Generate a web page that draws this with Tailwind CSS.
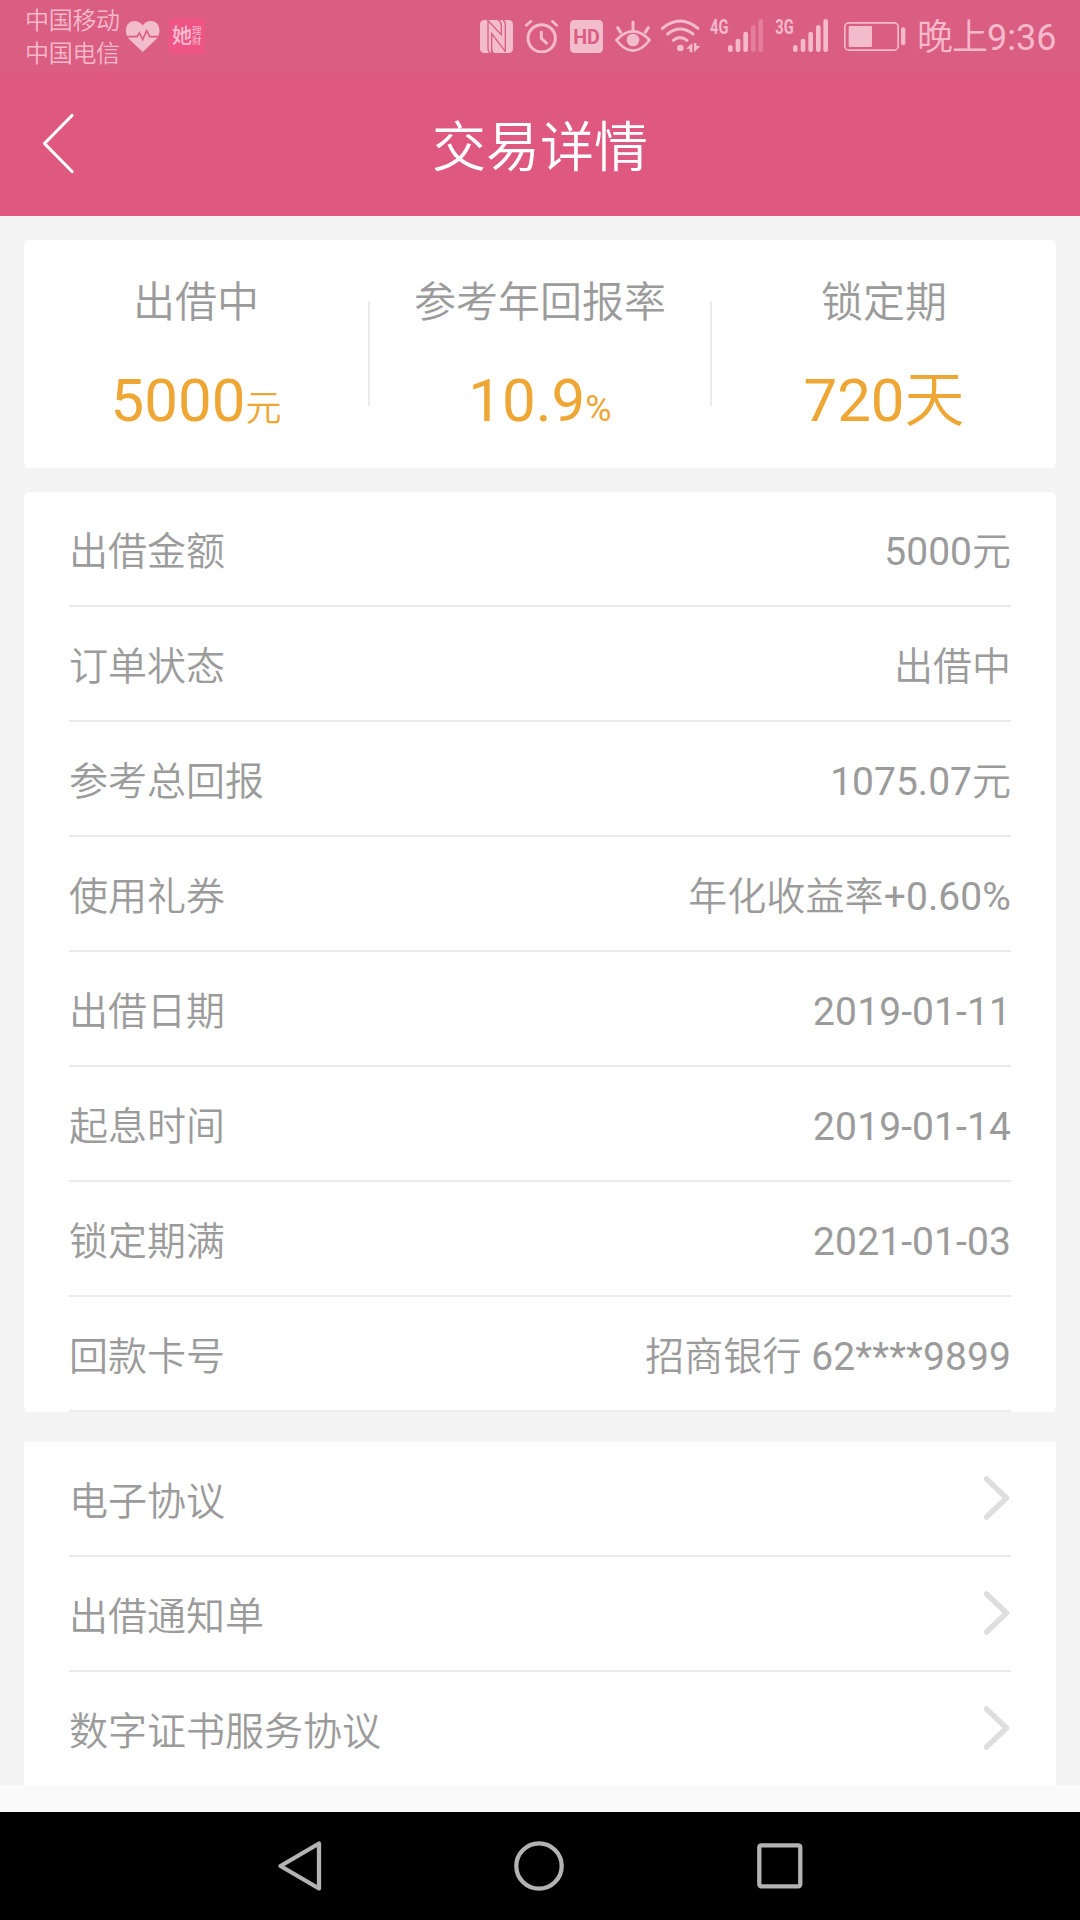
<!DOCTYPE html>
<html lang="zh-CN">
<head>
<meta charset="utf-8">
<title>交易详情</title>
<script src="https://cdn.jsdelivr.net/npm/@tailwindcss/browser@4"></script>
</head>
<body class="w-[1080px] h-[1920px] overflow-hidden bg-[#fafafa] text-[#9b9b9b] font-[Roboto,'Noto_Sans_CJK_SC',sans-serif] flex flex-col">

<!-- Status bar -->
<div class="h-[72px] shrink-0 bg-[#da5d82] text-[#f5b9cc] flex items-start">
  <div class="ml-[25px] mt-[5px] w-[96px] text-[24px] leading-[33px] font-[350] whitespace-nowrap tracking-[-0.3px]">
    <div>中国移动</div>
    <div>中国电信</div>
  </div>
  <svg class="ml-[4px] mt-[20px] shrink-0" width="35" height="33" viewBox="375 60 105 99">
    <path fill="#f3bccd" d="M428 156 L387 117 C370 98 376 63 404 63 C416 63 424 70 428 77 C432 70 440 63 453 63 C480 63 486 98 469 117 Z"/>
    <path fill="none" stroke="#da5d82" stroke-width="5" d="M374 110 H411 L418 99 L428 119 L440 92 L449 110 H482"/>
  </svg>
  <div class="ml-[9px] mt-[18px] w-[36px] h-[36px] shrink-0 rounded-[3px] bg-[#ee5585] text-[#f9bfd0] flex items-center justify-center">
    <span class="text-[20px] leading-none font-medium">她</span>
    <span class="w-[10px] text-[9.5px] leading-[10px]">理财</span>
  </div>
  <div class="ml-[275px] mt-[18px] h-[36px] flex items-start">
    <svg class="mt-[2px]" width="33" height="33" viewBox="60 60 99 99">
      <rect x="60" y="60" width="99" height="99" rx="13" fill="#f3bccd"/>
      <path fill="none" stroke="#da5d82" stroke-width="4" d="M84 60 V146 Q84 154 90 159 M82 60 L124 104 V82 Q124 62 112 59 M95 159 V101 L136 154 M95 101 V145 Q95 154 100 159 M129 60 Q136 64 136 74 V156"/>
    </svg>
    <svg class="ml-[12px] mt-[2px]" width="34" height="33" viewBox="195 60 102 99" fill="none" stroke="#f3bccd" stroke-linecap="round">
      <circle cx="245" cy="115" r="41" stroke-width="9"/>
      <path stroke-width="8" d="M199 76 L213 64 M277 64 L290 76"/>
      <path stroke-width="9" stroke-linecap="butt" d="M244 93 V115 L262 132"/>
    </svg>
    <svg class="ml-[11px] mt-[2px]" width="33" height="33" viewBox="330 60 99 99">
      <rect x="330" y="60" width="99" height="99" rx="13" fill="#f3bccd"/>
      <text x="379.500" y="131" text-anchor="middle" textLength="80" lengthAdjust="spacingAndGlyphs" font-family="Roboto" font-weight="700" font-size="60" fill="#da5d82">HD</text>
    </svg>
    <svg class="ml-[12px] mt-[2px]" width="36" height="33" viewBox="465 60 108 99" fill="none" stroke="#f3bccd" stroke-linecap="round">
      <path stroke-width="8" d="M469 120 Q519 68 569 120 Q519 184 469 120 Z" stroke-linejoin="round"/>
      <path stroke-width="9" d="M519 66 V88 M473 83 L482 97 M565 83 L556 97"/>
      <circle cx="519" cy="120" r="19" fill="#f3bccd" stroke="none"/>
    </svg>
    <svg class="ml-[9px] mt-[1px]" width="42" height="35" viewBox="600 57 126 105" fill="none" stroke="#f3bccd" stroke-width="9" stroke-linecap="round">
      <path d="M607 85 Q660 41 714 85 M623 102 Q660 72 699 102 M640 121 Q660 105 681 121"/>
      <circle cx="661" cy="144" r="10" fill="#f3bccd" stroke="none"/>
      <path fill="#f3bccd" stroke="none" d="M678 146 L697 129 V157 H689 V146 Z M702 157 V129 H709 V138 H721 Z"/>
    </svg>
    <svg class="ml-[8px] overflow-visible" width="54" height="36" viewBox="750 54 162 108" fill="none" stroke="#f5b9cc" stroke-width="14" stroke-linecap="round">
      <text x="750" y="101" font-family="Roboto" font-weight="700" font-size="60" textLength="55" lengthAdjust="spacingAndGlyphs" fill="#f5b9cc" stroke="none">4G</text>
      <path d="M811 142 V149 M834 123 V149 M857 102 V149"/>
      <path stroke="#e57d9c" d="M880 82 V149 M902 64 V149"/>
    </svg>
    <svg class="ml-[11px] overflow-visible" width="54" height="36" viewBox="45 54 162 108" fill="none" stroke="#f5b9cc" stroke-width="14" stroke-linecap="round">
      <text x="46" y="101" font-family="Roboto" font-weight="700" font-size="60" textLength="55" lengthAdjust="spacingAndGlyphs" fill="#f5b9cc" stroke="none">3G</text>
      <path d="M106 142 V149 M129 123 V149 M152 102 V149 M175 82 V149 M197 64 V149"/>
    </svg>
    <svg class="ml-[15px] mt-[4px]" width="62" height="29" viewBox="249 66 186 87">
      <rect x="251.500" y="68.500" width="160" height="82" rx="12" fill="none" stroke="#f5b9cc" stroke-width="5"/>
      <rect x="263" y="78" width="70" height="63" rx="4" fill="#f3bccd"/>
      <rect x="420" y="82" width="13" height="54" rx="6" fill="#f5b9cc"/>
    </svg>
    <div class="ml-[11px] mt-[2px] text-[36px] leading-[36px] whitespace-nowrap"><span class="font-[350] tracking-[-1px]">晚上</span>9:36</div>
  </div>
</div>

<!-- Title bar -->
<div class="h-[144px] shrink-0 bg-[#df5880] text-white flex items-center">
  <svg class="ml-[42px] shrink-0" width="34" height="62" viewBox="0 0 34 62" fill="none" stroke="#fff" stroke-width="3.200" stroke-linecap="round" stroke-linejoin="round">
    <path d="M30 2.500 L2.500 30.500 L30 58.500"/>
  </svg>
  <h1 class="flex-1 mr-[76px] pt-[10px] text-center text-[54px] leading-[72px] font-[350]">交易详情</h1>
</div>

<!-- Content -->
<main class="h-[1569px] shrink-0 overflow-hidden bg-[#f4f4f4] px-[24px] pt-[24px]">
  <section class="h-[228px] rounded-[6px] bg-white grid grid-cols-3 text-center relative">
    <div class="pt-[35px]">
      <div class="text-[42px] leading-[56px] font-[350]">出借中</div>
      <div class="mt-[34px] text-[60px] leading-[72px] text-[#eea734]">5000<span class="text-[36px] font-[350]">元</span></div>
    </div>
    <div class="pt-[35px]">
      <div class="text-[42px] leading-[56px] font-[350]">参考年回报率</div>
      <div class="mt-[34px] text-[60px] leading-[72px] text-[#eea734]">10.9<span class="text-[36px]">%</span></div>
    </div>
    <div class="pt-[35px]">
      <div class="text-[42px] leading-[56px] font-[350]">锁定期</div>
      <div class="mt-[34px] text-[60px] leading-[72px] text-[#eea734]">720<span class="font-[350]">天</span></div>
    </div>
    <div class="absolute left-[344px] top-[61px] w-[2px] h-[105px] bg-[#ebebeb]"></div>
    <div class="absolute left-[686px] top-[61px] w-[2px] h-[105px] bg-[#ebebeb]"></div>
  </section>

  <section class="mt-[24px] rounded-[6px] bg-white px-[45px] text-[39px]">
    <div class="h-[115px] pt-[7px] border-b-2 border-[#ebebeb] flex items-center justify-between"><span class="font-[350]">出借金额</span><span>5000<span class="font-[350]">元</span></span></div>
    <div class="h-[115px] pt-[7px] border-b-2 border-[#ebebeb] flex items-center justify-between"><span class="font-[350]">订单状态</span><span class="font-[350]">出借中</span></div>
    <div class="h-[115px] pt-[7px] border-b-2 border-[#ebebeb] flex items-center justify-between"><span class="font-[350]">参考总回报</span><span>1075.07<span class="font-[350]">元</span></span></div>
    <div class="h-[115px] pt-[7px] border-b-2 border-[#ebebeb] flex items-center justify-between"><span class="font-[350]">使用礼券</span><span class="tracking-[0.1px]"><span class="font-[350]">年化收益率</span>+0.60%</span></div>
    <div class="h-[115px] pt-[7px] border-b-2 border-[#ebebeb] flex items-center justify-between"><span class="font-[350]">出借日期</span><span class="tracking-[0.1px]">2019-01-11</span></div>
    <div class="h-[115px] pt-[7px] border-b-2 border-[#ebebeb] flex items-center justify-between"><span class="font-[350]">起息时间</span><span class="tracking-[0.1px]">2019-01-14</span></div>
    <div class="h-[115px] pt-[7px] border-b-2 border-[#ebebeb] flex items-center justify-between"><span class="font-[350]">锁定期满</span><span class="tracking-[0.1px]">2021-01-03</span></div>
    <div class="h-[115px] pt-[7px] border-b-2 border-[#ebebeb] flex items-center justify-between"><span class="font-[350]">回款卡号</span><span class="tracking-[0.1px]"><span class="font-[350]">招商银行</span> 62****9899</span></div>
  </section>

  <section class="mt-[30px] bg-white px-[45px] text-[39px]">
    <div class="h-[115px] border-b-2 border-[#ebebeb] flex items-center justify-between"><span class="pt-[7px] font-[350]">电子协议</span>
      <svg class="mr-[1px] mb-[1px]" width="26" height="44" viewBox="0 0 26 44" fill="none" stroke="#dedede" stroke-width="5.500" stroke-linecap="round" stroke-linejoin="round"><path d="M2.500 3 L22.500 22 L2.500 41"/></svg></div>
    <div class="h-[115px] border-b-2 border-[#ebebeb] flex items-center justify-between"><span class="pt-[7px] font-[350]">出借通知单</span>
      <svg class="mr-[1px] mb-[1px]" width="26" height="44" viewBox="0 0 26 44" fill="none" stroke="#dedede" stroke-width="5.500" stroke-linecap="round" stroke-linejoin="round"><path d="M2.500 3 L22.500 22 L2.500 41"/></svg></div>
    <div class="h-[115px] border-b-2 border-[#ebebeb] flex items-center justify-between"><span class="pt-[7px] font-[350]">数字证书服务协议</span>
      <svg class="mr-[1px] mb-[1px]" width="26" height="44" viewBox="0 0 26 44" fill="none" stroke="#dedede" stroke-width="5.500" stroke-linecap="round" stroke-linejoin="round"><path d="M2.500 3 L22.500 22 L2.500 41"/></svg></div>
  </section>
</main>

<!-- Navigation bar -->
<nav class="mt-[27px] h-[108px] shrink-0 bg-black flex items-center justify-between pl-[277px] pr-[277px]">
  <svg width="46" height="52" viewBox="0 0 46 52" fill="none" stroke="#b3b3b3" stroke-width="4.300" stroke-linejoin="round"><path d="M42 3.500 V48.500 L3.500 26 Z"/></svg>
  <svg class="-ml-[2px]" width="52" height="52" viewBox="0 0 52 52" fill="none" stroke="#b3b3b3" stroke-width="4.300"><circle cx="26" cy="26" r="22.700"/></svg>
  <svg width="46" height="46" viewBox="0 0 46 46" fill="none" stroke="#b3b3b3" stroke-width="4.300"><rect x="2.300" y="2.300" width="41" height="41" rx="2"/></svg>
</nav>
</body>
</html>
